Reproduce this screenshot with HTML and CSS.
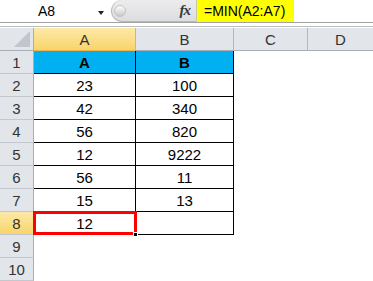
FILE: index.html
```html
<!DOCTYPE html>
<html lang="en">
<head>
  <meta charset="UTF-8" />
  <title>MIN function</title>
  <link rel="stylesheet" href="styles.css">
</head>
<body>
  <div class="formula-bar">
    <div class="name-box">
      <span class="name">A8</span>
      <span class="arrow"></span>
    </div>
    <div class="splitter">
      <span class="knob"></span>
      <span class="fx">fx</span>
    </div>
    <div class="formula">=MIN(A2:A7)</div>
    <div class="formula-rest"></div>
  </div>
  <div class="bar-gap"></div>

  <div class="sheet">
    <div class="hd corner"><span class="tri"></span></div>
    <div class="hd col sel">A</div>
    <div class="hd col">B</div>
    <div class="hd col">C</div>
    <div class="hd col last">D</div>

    <div class="hd row">1</div>
    <div class="cell t head">A</div>
    <div class="cell t head">B</div>
    <div class="cell"></div><div class="cell"></div>

    <div class="hd row">2</div>
    <div class="cell t">23</div><div class="cell t">100</div>
    <div class="cell"></div><div class="cell"></div>

    <div class="hd row">3</div>
    <div class="cell t">42</div><div class="cell t">340</div>
    <div class="cell"></div><div class="cell"></div>

    <div class="hd row">4</div>
    <div class="cell t">56</div><div class="cell t">820</div>
    <div class="cell"></div><div class="cell"></div>

    <div class="hd row">5</div>
    <div class="cell t">12</div><div class="cell t">9222</div>
    <div class="cell"></div><div class="cell"></div>

    <div class="hd row">6</div>
    <div class="cell t">56</div><div class="cell t">11</div>
    <div class="cell"></div><div class="cell"></div>

    <div class="hd row">7</div>
    <div class="cell t">15</div><div class="cell t">13</div>
    <div class="cell"></div><div class="cell"></div>

    <div class="hd row sel">8</div>
    <div class="cell t active">12<span class="handle"></span></div>
    <div class="cell t"></div>
    <div class="cell"></div><div class="cell"></div>

    <div class="hd row">9</div>
    <div class="cell"></div><div class="cell"></div>
    <div class="cell"></div><div class="cell"></div>

    <div class="hd row">10</div>
    <div class="cell"></div><div class="cell"></div>
    <div class="cell"></div><div class="cell"></div>
  </div>
</body>
</html>
```

FILE: styles.css
```css
* { box-sizing: border-box; margin: 0; padding: 0; }
body {
  font-family: 'Liberation Sans', Arial, sans-serif;
  background: #fff; color: #000;
  width: 373px; height: 281px; overflow: hidden;
}

/* Formula bar */
.formula-bar {
  display: flex; height: 23px;
  border-bottom: 1px solid #a3a3a3;
}
.name-box {
  width: 111px; display: flex; align-items: center;
  position: relative; background: #fff;
}
.name { font-size: 14px; margin-left: 38px; }
.arrow {
  position: absolute; left: 98px; top: 11px;
  border-left: 3px solid transparent; border-right: 3px solid transparent;
  border-top: 4px solid #222;
}
.splitter {
  width: 85px; display: flex; align-items: center; justify-content: space-between;
  background: linear-gradient(#ececec, #dcdde0);
  border: 1px solid #b9b9b9; border-right: none; border-top: none;
  border-radius: 12px 0 0 12px;
  padding: 0 6px 0 2px;
}
.knob {
  width: 12px; height: 12px; border-radius: 50%;
  background: linear-gradient(#fdfdfd, #c9c9c9);
  border: 1px solid #c3c3c3;
}
.fx {
  font-family: 'Liberation Serif', serif; font-style: italic; font-weight: bold;
  font-size: 15px; color: #3a3a3a; letter-spacing: -1px;
}
.formula {
  width: 98px; background: #ffff00; font-size: 14px;
  display: flex; align-items: center; padding-left: 7px;
  border-left: 1px solid #c9c9a0;
}
.formula-rest { flex: 1; background: #fff; }
.bar-gap {
  height: 4px; border-bottom: 1px solid #bcbcbc; border-top: 2px solid #fff;
  margin-bottom: 1px;
}

/* Sheet grid */
.sheet {
  display: grid;
  grid-template-columns: 34px 102px 98px 74px 1fr;
  grid-auto-rows: 23px;
}
.hd {
  background: #e2e5ea; color: #333; font-size: 15px;
  display: flex; align-items: center; justify-content: center;
}
.corner { border-right: 1px solid #a7aeb8; border-bottom: 1px solid #a7aeb8; position: relative; }
.tri {
  position: absolute; right: 3px; bottom: 3px;
  border-left: 16px solid transparent; border-bottom: 16px solid #c2c6cc;
}
.col { border-right: 1px solid #b2b8c1; border-bottom: 1px solid #a7aeb8; }
.col.last { border-right: none; }
.row { border-right: 1px solid #a7aeb8; border-bottom: 1px solid #c3c8cf; }
.hd.sel {
  background: linear-gradient(#fce9a8, #f9d46a);
  border-bottom-color: #eeb64a;
}
.row.sel { border-bottom-color: #c3c8cf; }

.cell {
  font-size: 15px;
  display: flex; align-items: center; justify-content: center;
}
.cell.t { border-right: 1px solid #000; border-bottom: 1px solid #000; }
.cell.head { background: #00b0f0; font-weight: bold; }

/* Active cell */
.active { position: relative; }
.active::after {
  content: ''; position: absolute;
  top: -1px; left: -1px; right: -2px; bottom: -1px;
  border: 3px solid #ff0000;
}
.handle {
  position: absolute; right: -3px; bottom: -3px;
  width: 5px; height: 5px; background: #000; z-index: 1;
  border: 1px solid #fff;
}
```
